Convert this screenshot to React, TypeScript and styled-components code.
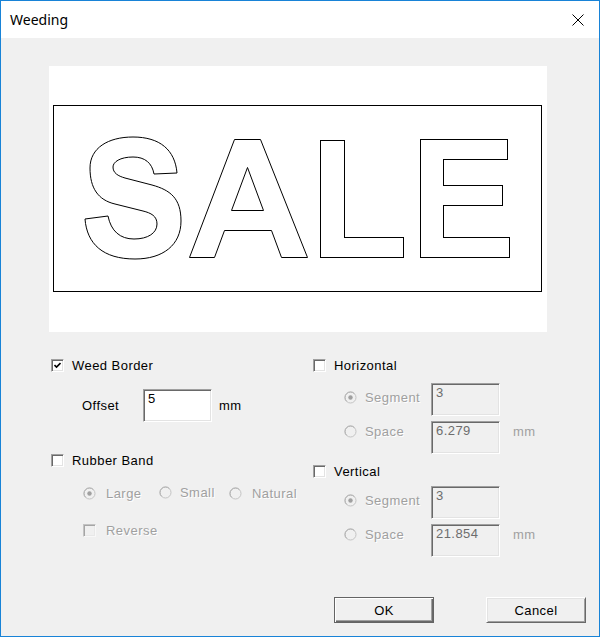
import styled, { createGlobalStyle } from "styled-components";

const GlobalStyle = createGlobalStyle`
  html, body {
    margin: 0;
    padding: 0;
    background: #ffffff;
  }
  body {
    font-family: "Liberation Sans", Arial, sans-serif;
  }
`;

const Window = styled.div`
  width: 600px;
  height: 637px;
  box-sizing: border-box;
  border: 1px solid #1883d7;
  background: #f0f0f0;
  display: flex;
  flex-direction: column;
  overflow: hidden;
`;

const TitleBar = styled.div`
  height: 37px;
  flex-shrink: 0;
  background: #ffffff;
  display: flex;
  align-items: center;
  justify-content: space-between;
  padding: 0 15px 0 9px;
`;

const Title = styled.span`
  font-family: "Noto Sans", "Open Sans", sans-serif;
  font-size: 14px;
  color: #000000;
`;

const CloseIcon = styled.svg`
  width: 12px;
  height: 12px;
  display: block;
`;

const Body = styled.div`
  flex: 1;
  display: flex;
  flex-direction: column;
  padding: 28px 0 0 48px;
  font-size: 13px;
  letter-spacing: 0.45px;
  color: #000000;
`;

const Preview = styled.div`
  width: 498px;
  height: 266px;
  background: #ffffff;

  svg {
    display: block;
  }
`;

const Options = styled.div`
  display: grid;
  grid-template-columns: 262px 240px;
  margin-left: 2px;
  margin-top: 25px;
`;

const Column = styled.div`
  display: flex;
  flex-direction: column;
`;

const Row = styled.div<{ $mt?: number; $h?: number; $indent?: number }>`
  display: flex;
  align-items: center;
  margin-top: ${({ $mt }) => $mt ?? 0}px;
  height: ${({ $h }) => $h ?? 17}px;
  padding-left: ${({ $indent }) => $indent ?? 0}px;
`;

const FieldRow = styled(Row)`
  align-items: flex-start;
`;

const Box = styled.span<{ $disabled?: boolean }>`
  width: 13px;
  height: 13px;
  box-sizing: border-box;
  flex-shrink: 0;
  display: flex;
  align-items: center;
  justify-content: center;
  border: 1px solid;
  border-color: #a0a0a0 #ffffff #ffffff #a0a0a0;
  box-shadow: inset 1px 1px 0 #696969, inset -1px -1px 0 #e3e3e3;
  background: ${({ $disabled }) => ($disabled ? "#f0f0f0" : "#ffffff")};
  opacity: ${({ $disabled }) => ($disabled ? 0.55 : 1)};
`;

const Text = styled.span<{ $disabled?: boolean; $gap?: number }>`
  margin-left: ${({ $gap }) => $gap ?? 8}px;
  white-space: nowrap;
  color: ${({ $disabled }) => ($disabled ? "#a0a0a0" : "#000000")};
  text-shadow: ${({ $disabled }) => ($disabled ? "1px 1px 0 #ffffff" : "none")};
`;

const RadioOption = styled.span<{ $width?: number; $mt?: number }>`
  display: inline-flex;
  align-items: center;
  height: 17px;
  width: ${({ $width }) => ($width ? `${$width}px` : "auto")};
  margin-top: ${({ $mt }) => $mt ?? 0}px;
  flex-shrink: 0;
`;

const FieldLabel = styled.span<{ $width: number }>`
  width: ${({ $width }) => $width}px;
  flex-shrink: 0;
`;

const Field = styled.input`
  width: 69px;
  height: 33px;
  box-sizing: border-box;
  margin: 0;
  padding: 1px 4px 15px;
  font: inherit;
  letter-spacing: inherit;
  color: #000000;
  background: #ffffff;
  border: 1px solid;
  border-color: #a0a0a0 #ffffff #ffffff #a0a0a0;
  box-shadow: inset 1px 1px 0 #696969, inset -1px -1px 0 #e3e3e3;
  outline: none;

  &:disabled {
    background: #f0f0f0;
    color: #6d6d6d;
    -webkit-text-fill-color: #6d6d6d;
    opacity: 1;
  }
`;

const Unit = styled.span<{ $gap: number; $disabled?: boolean; $mt?: number }>`
  margin-left: ${({ $gap }) => $gap}px;
  margin-top: ${({ $mt }) => $mt ?? 0}px;
  line-height: 17px;
  color: ${({ $disabled }) => ($disabled ? "#a0a0a0" : "#000000")};
`;

const ButtonBar = styled.div`
  display: flex;
  justify-content: flex-end;
  gap: 52px;
  margin-top: 40px;
  padding-right: 13px;
`;

const Button = styled.button<{ $primary?: boolean }>`
  width: 100px;
  height: 26px;
  box-sizing: border-box;
  padding: 0;
  font: inherit;
  letter-spacing: inherit;
  color: #000000;
  background: #f0f0f0;
  border: 1px solid;
  border-color: ${({ $primary }) =>
    $primary ? "#646464" : "#ffffff #696969 #696969 #ffffff"};
  box-shadow: ${({ $primary }) =>
    $primary
      ? "inset 1px 1px 0 #ffffff, inset -1px -1px 0 #696969, inset -2px -2px 0 #a0a0a0"
      : "inset 1px 1px 0 #e3e3e3, inset -1px -1px 0 #a0a0a0"};
`;

function CheckMark() {
  return (
    <svg width="7" height="7" viewBox="0 0 7 7">
      <path d="M0.5 3 L2.5 5 L6.5 1" fill="none" stroke="#000" strokeWidth="1.6" />
    </svg>
  );
}

function CheckBox({ checked, disabled }: { checked?: boolean; disabled?: boolean }) {
  return <Box $disabled={disabled}>{checked && <CheckMark />}</Box>;
}

function Radio({ selected }: { selected?: boolean }) {
  return (
    <svg width="13" height="13" viewBox="0 0 13 13" style={{ flexShrink: 0 }}>
      <circle cx="6.5" cy="6.5" r="5.5" fill="#f0f0f0" stroke="#c4c4c4" />
      <path d="M2.6 10.4 A5.5 5.5 0 0 1 10.4 2.6" fill="none" stroke="#b0b0b0" />
      {selected && <circle cx="6.5" cy="6.5" r="2.2" fill="#a0a0a0" />}
    </svg>
  );
}

function SaleArtwork() {
  return (
    <svg width="498" height="266" viewBox="49 66 498 266">
      <g fill="none" stroke="#000" strokeWidth="1">
        <rect x="53.5" y="105.5" width="488" height="186" shapeRendering="crispEdges" />
        <path
          d="M177 173 L154 174 C152 163 145 157 133 157 C120 157 113 162 113 167
             C113 173 118 176 125 178 L152 185 C170 190 181 198 181 221
             C181 245 163 259 135 259 C103 259 87 244 85 219 L108 216
             C111 231 120 239 134 239 C148 239 157 233 157 224
             C157 216 151 213 143 211 L115 204 C98 200 90 188 90 168
             C90 148 108 137 133 137 C160 137 175 150 177 173 Z"
        />
        <path d="M189.5 257.5 L234.5 139.5 L260.5 139.5 L307.5 257.5 L281.5 257.5 L271.5 230.5 L224.5 230.5 L214.5 257.5 Z" />
        <path d="M247.5 167.5 L231.5 210.5 L263.5 210.5 Z" />
        <path
          shapeRendering="crispEdges"
          d="M320.5 140.5 L344.5 140.5 L344.5 237.5 L403.5 237.5 L403.5 257.5 L320.5 257.5 Z"
        />
        <path
          shapeRendering="crispEdges"
          d="M420.5 139.5 L507.5 139.5 L507.5 159.5 L443.5 159.5 L443.5 185.5 L502.5 185.5 L502.5 205.5 L443.5 205.5 L443.5 237.5 L509.5 237.5 L509.5 257.5 L420.5 257.5 Z"
        />
      </g>
    </svg>
  );
}

export default function App() {
  return (
    <>
      <GlobalStyle />
      <Window>
        <TitleBar>
          <Title>Weeding</Title>
          <CloseIcon viewBox="0 0 12 12">
            <path d="M0.5 0.5 L11.5 11.5 M11.5 0.5 L0.5 11.5" stroke="#000" strokeWidth="1" />
          </CloseIcon>
        </TitleBar>

        <Body>
          <Preview>
            <SaleArtwork />
          </Preview>

          <Options>
            <Column>
              <Row>
                <CheckBox checked />
                <Text>Weed Border</Text>
              </Row>
              <Row $mt={15} $h={33} $indent={31}>
                <FieldLabel $width={61}>Offset</FieldLabel>
                <Field defaultValue="5" />
                <Unit $gap={7}>mm</Unit>
              </Row>
              <Row $mt={30}>
                <CheckBox />
                <Text>Rubber Band</Text>
              </Row>
              <Row $mt={16} $indent={32}>
                <RadioOption $width={76}>
                  <Radio selected />
                  <Text $disabled $gap={10}>Large</Text>
                </RadioOption>
                <RadioOption $width={70} $mt={-3}>
                  <Radio />
                  <Text $disabled $gap={8}>Small</Text>
                </RadioOption>
                <RadioOption>
                  <Radio />
                  <Text $disabled $gap={10}>Natural</Text>
                </RadioOption>
              </Row>
              <Row $mt={20} $indent={32}>
                <CheckBox disabled />
                <Text $disabled $gap={10}>Reverse</Text>
              </Row>
            </Column>

            <Column>
              <Row>
                <CheckBox />
                <Text>Horizontal</Text>
              </Row>
              <FieldRow $mt={9} $h={33} $indent={31}>
                <RadioOption $width={87} $mt={6}>
                  <Radio selected />
                  <Text $disabled>Segment</Text>
                </RadioOption>
                <Field disabled defaultValue="3" />
              </FieldRow>
              <FieldRow $mt={5} $h={33} $indent={31}>
                <RadioOption $width={87} $mt={2}>
                  <Radio />
                  <Text $disabled>Space</Text>
                </RadioOption>
                <Field disabled defaultValue="6.279" />
                <Unit $gap={13} $mt={2} $disabled>mm</Unit>
              </FieldRow>
              <Row $mt={9}>
                <CheckBox />
                <Text>Vertical</Text>
              </Row>
              <FieldRow $mt={6} $h={33} $indent={31}>
                <RadioOption $width={87} $mt={6}>
                  <Radio selected />
                  <Text $disabled>Segment</Text>
                </RadioOption>
                <Field disabled defaultValue="3" />
              </FieldRow>
              <FieldRow $mt={5} $h={33} $indent={31}>
                <RadioOption $width={87} $mt={2}>
                  <Radio />
                  <Text $disabled>Space</Text>
                </RadioOption>
                <Field disabled defaultValue="21.854" />
                <Unit $gap={13} $mt={2} $disabled>mm</Unit>
              </FieldRow>
            </Column>
          </Options>

          <ButtonBar>
            <Button $primary>OK</Button>
            <Button>Cancel</Button>
          </ButtonBar>
        </Body>
      </Window>
    </>
  );
}
